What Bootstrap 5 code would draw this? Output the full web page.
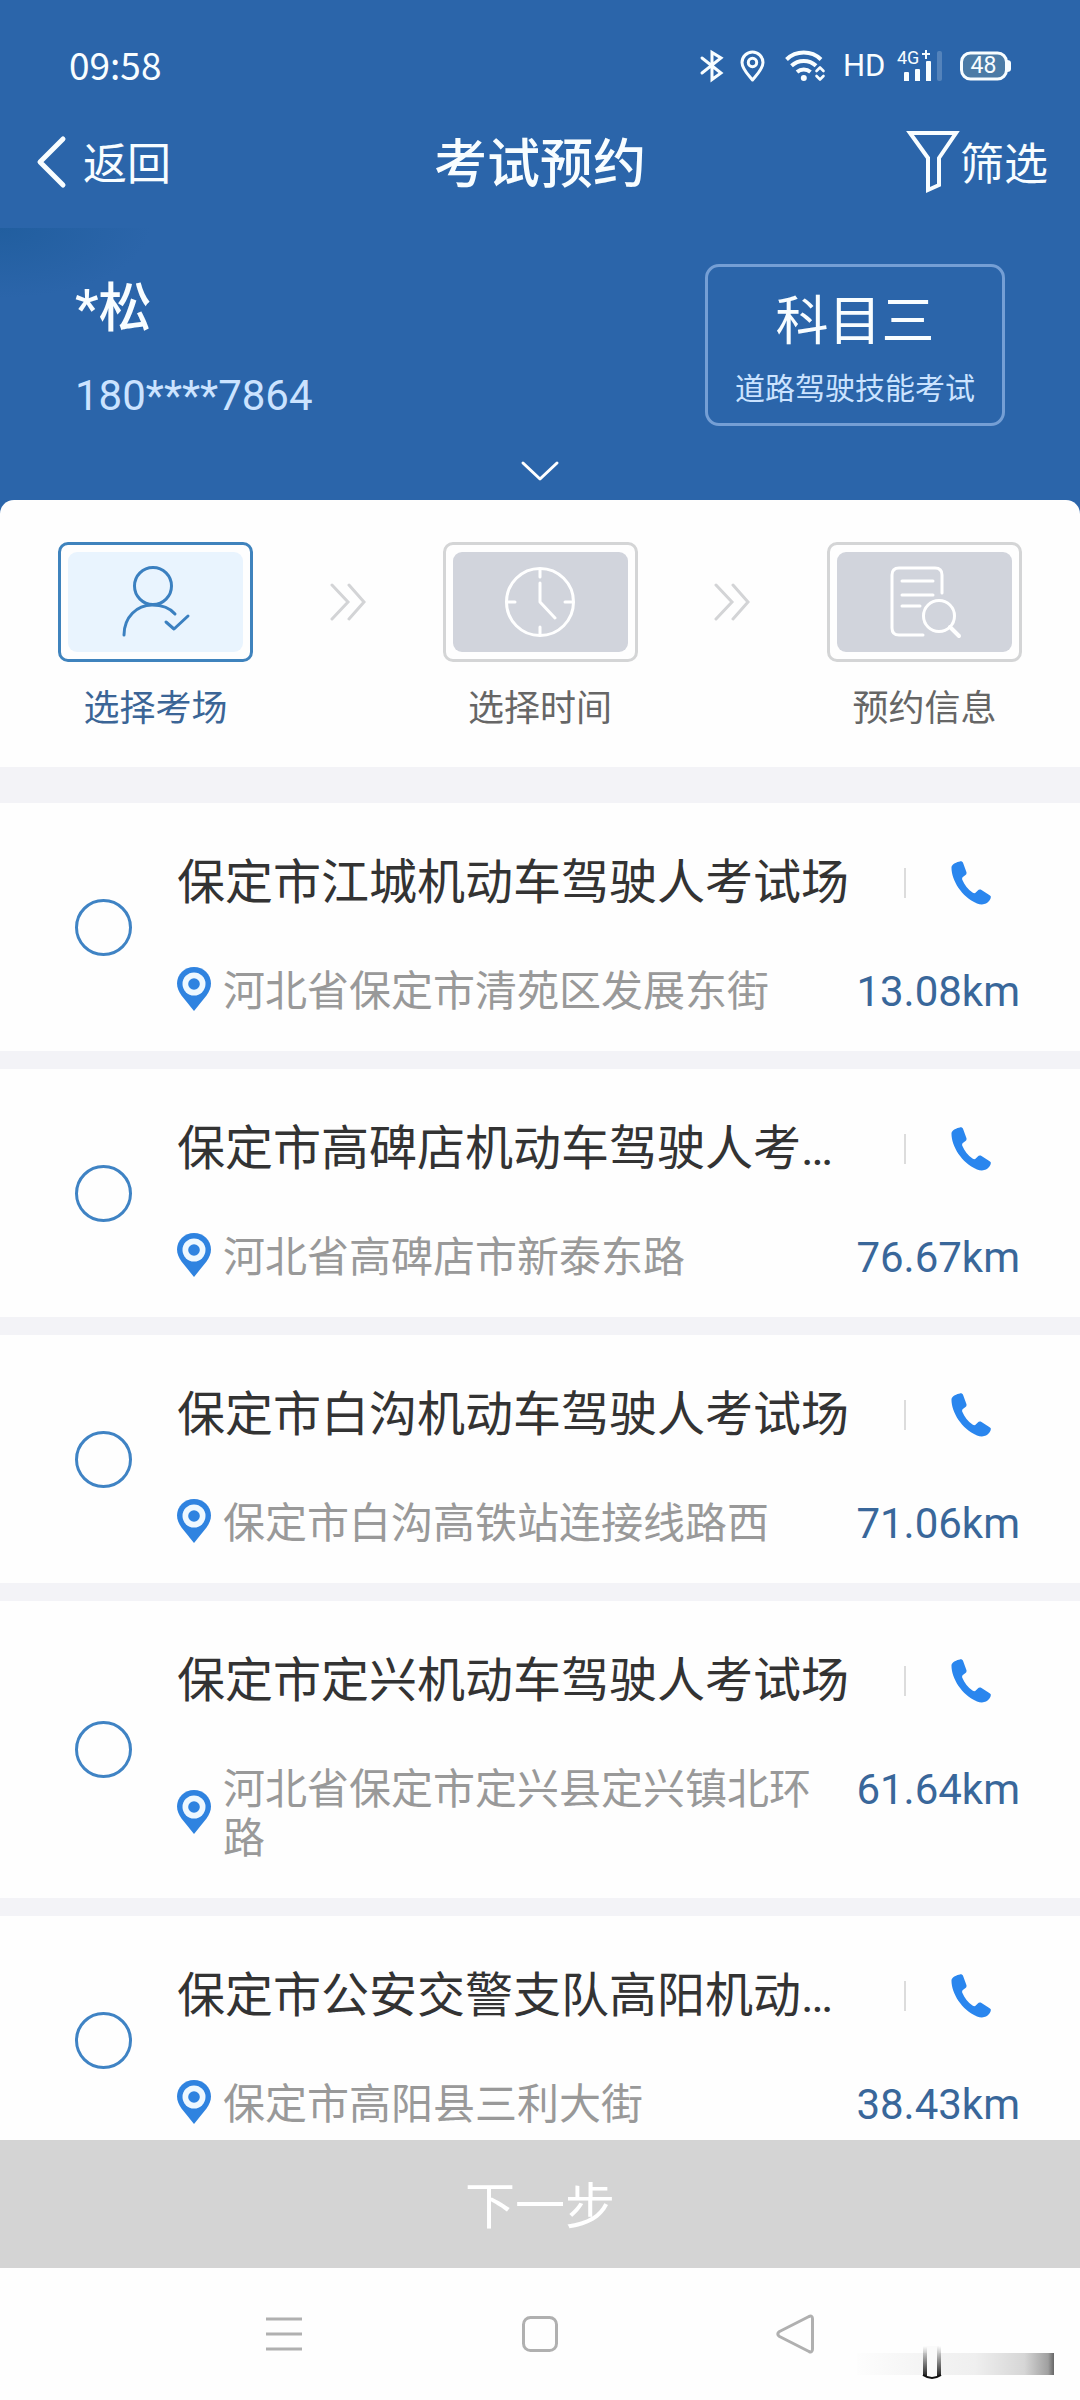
<!DOCTYPE html>
<html lang="zh-CN">
<head>
<meta charset="utf-8">
<meta name="viewport" content="width=device-width, initial-scale=1">
<title>考试预约</title>
<link href="https://cdn.jsdelivr.net/npm/bootstrap@5.3.0/dist/css/bootstrap.min.css" rel="stylesheet">
<style>
  body { font-family: Roboto, "Noto Sans CJK SC", sans-serif; color: #333; background: #fefefe; }
  svg { display: block; flex: none; overflow: visible; }
  .line-icon { fill: none; stroke: currentColor; stroke-linecap: round; stroke-linejoin: round; }
  .hero { background: #2b65aa; color: #f8fdff; }
  .status { padding: 38px 69px 0; height: 92px; line-height: 52px; }
  .clock { font-family: "Noto Sans CJK SC", sans-serif; font-size: 37px; }
  .status-icons { height: 56px; }
  .hd { font-size: 31px; width: 54px; }
  .signal { width: 46px; height: 32px; margin-right: 17px; }
  .net-type { font-size: 18px; line-height: 18px; top: -1px; left: 0; }
  .battery { width: 51px; height: 32px; }
  .battery-level { font-size: 23px; line-height: 32px; width: 47px; top: 0; left: 0; }
  .topbar { height: 136px; padding: 10px 32px 0; }
  .topbar > * { flex: 1 1 0; }
  .topbar h1 { font-size: 53px; line-height: 60px; font-weight: 500; flex: 0 0 auto; }
  .bar-link { font-size: 44px; line-height: 60px; color: inherit; text-decoration: none; }
  .bar-link svg { margin-bottom: 6px; }
  .back-icon { margin: 0 17px 0 4px; }
  .profile { height: 232px; padding: 0 75px; background: radial-gradient(ellipse 150px 70px at 0 0, #215e9f, #2b65aa); }
  .who { padding-top: 51px; }
  .who-name { font-size: 53px; line-height: 60px; font-weight: 500; }
  .who-phone { font-size: 42px; line-height: 48px; margin-top: 33px; color: #cbe3ff; }
  .subject { width: 300px; height: 162px; margin-top: 36px; border: 3px solid #759fd5; border-radius: 14px; }
  .subject-name { font-size: 53px; line-height: 60px; margin-top: 25px; }
  .subject-note { font-size: 30px; line-height: 40px; margin-top: 17px; color: #cbe3ff; }
  .expand { padding-bottom: 18px; }
  .sheet-wrap { background: #2b65aa; }
  .sheet { background: #fefefe; border-radius: 14px 14px 0 0; padding: 42px 58px 33px; }
  .step { width: 195px; color: #666; font-size: 36px; line-height: 50px; }
  .step-frame { height: 120px; border: 3px solid #d4d5d6; border-radius: 10px; padding: 7px; margin-bottom: 22px; }
  .step-face { background: #d1d4dc; color: #fff; border-radius: 9px; }
  .step.current { color: #3b6596; }
  .current .step-frame { border-color: #3f83bd; }
  .current .step-face { background: #e9f4fe; color: #3b80c0; }
  .arrows { height: 120px; color: #d3d4d6; }
  .list-area { background: #f3f3f7; min-height: 0; overflow-y: auto; scrollbar-width: none; padding-top: 36px; }
  .list-area::-webkit-scrollbar { display: none; }
  .site { background: #fefefe; padding: 51px 60px 35px 75px; margin-bottom: 18px; }
  .site-radio { appearance: none; width: 57px; height: 57px; margin: 0 45px 16px 0; border: 3px solid #3f83c4; border-radius: 50%; background: #fefefe; flex: none; }
  .site-radio:checked { background: #2e86ec; box-shadow: inset 0 0 0 10px #fff; }
  .site-body { min-width: 0; }
  .site-name { font-size: 48px; line-height: 58px; }
  .rule { width: 2px; height: 30px; background: #dcdcdc; margin: 0 45px 0 54px; }
  .call { color: #2a86ee; margin-right: 29px; }
  .site-meta { margin-top: 55px; font-size: 42px; line-height: 49px; }
  .pin { color: #2f83e0; margin: 0 12px 5px 0; }
  .addr { color: #999; min-width: 0; }
  .dist { color: #39679a; margin-left: 10px; }
  .next { height: 128px; background: #d4d4d4; color: #fff; font-size: 50px; border: 0; padding-top: 8px; }
  .sysnav { height: 132px; padding: 0 153px 0 156px; color: #b0b0b0; }
  .sysnav button { background: none; border: 0; color: inherit; padding: 0; }
  .smudge { right: 26px; bottom: 20px; }
</style>
</head>
<body class="vh-100 d-flex flex-column overflow-hidden">
<svg width="0" height="0" class="position-absolute" aria-hidden="true">
  <symbol id="pin" viewBox="0 0 34 44"><path fill="currentColor" d="M17 0C7.600 0 0 7.400 0 16.600 0 21 2 25 4.500 28.500L17 44 29.500 28.500C32 25 34 21 34 16.600 34 7.400 26.400 0 17 0Z"/><circle cx="17" cy="17" r="11.500" fill="#eef8ff"/><circle cx="17" cy="17" r="5.800" fill="currentColor"/></symbol>
  <symbol id="phone" viewBox="0 0 40 44"><path fill="currentColor" d="M9 .4C6 .8 1 3 .5 6 0 18 10 36 26 42.500 29 43.700 33 43.600 35 42.600 38 41 40.200 37.500 39.800 35.500 39.600 34.600 38.500 34 37.500 33.400L30.500 29C29 28.200 27.600 28.500 26.800 29.500L24.500 31.800C23.800 32.500 22.500 32.200 21.500 31.500 17 28.400 13.500 24 11.300 18.800 10.800 17.500 11.200 16.500 12.200 15.800L14.500 14C15.500 13.200 15.800 12 15.300 10.700L12.200 2.200C11.700.9 10.500.2 9 .4Z"/></symbol>
  <symbol id="arrows" viewBox="0 0 36 38"><path d="M2 2 18 19 2 36M19 2 34 19 19 36" fill="none" stroke="currentColor" stroke-width="3" stroke-linecap="round"/></symbol>
</svg>

<header class="hero">
  <div class="status d-flex justify-content-between">
    <span class="clock">09:58</span>
    <div class="status-icons d-flex align-items-center">
      <svg width="24" height="32" viewBox="0 0 24 32" class="line-icon me-3" stroke-width="3"><path d="M2 8 21 23 12 29.500V2.500L21 8 2 23" stroke-linejoin="miter"/></svg>
      <svg width="25" height="32" viewBox="0 0 25 32" class="line-icon me-3" stroke-width="3"><path d="M12.500 30C8 24.500 2 19 2 12.500a10.500 10.500 0 0 1 21 0C23 19 17 24.500 12.500 30Z"/><circle cx="12.500" cy="12.500" r="4.200"/></svg>
      <svg width="42" height="32" viewBox="0 0 42 32" class="line-icon ms-1 me-3" stroke-width="4"><g stroke-linecap="butt"><path d="M1.500 9.500a25 25 0 0 1 34.500 0M6.500 15.800a18 18 0 0 1 24.500 0M12 22a10.500 10.500 0 0 1 13.500 0"/></g><circle cx="18.800" cy="28" r="3" fill="currentColor" stroke="none"/><path stroke-width="2.600" d="m31.500 21 3.500-3.500 3.500 3.500M31.500 26l3.500 3.500 3.500-3.500"/></svg>
      <span class="hd">HD</span>
      <div class="signal position-relative">
        <span class="net-type position-absolute">4G</span>
        <svg width="46" height="32" viewBox="0 0 46 32" fill="currentColor"><path d="M25 3h3V0h2v3h3v2h-3v4h-2V5h-3zM7 23q0-1 1-1h3q1 0 1 1v8H7zM18 20q0-1 1-1h3q1 0 1 1v11h-5zM29 12q0-1 1-1h3q1 0 1 1v19h-5z"/><rect x="40" y="1" width="5" height="30" rx="2" opacity=".2"/></svg>
      </div>
      <div class="battery position-relative">
        <svg width="51" height="32" viewBox="0 0 51 32"><rect x="1.500" y="3" width="45" height="26" rx="9" fill="#4b7ba6" stroke="currentColor" stroke-width="3"/><path d="M47 10q4 0 4 3v6q0 3-4 3z" fill="currentColor"/></svg>
        <span class="battery-level position-absolute text-center">48</span>
      </div>
    </div>
  </div>
  <nav class="topbar d-flex align-items-center">
    <div><a href="#" class="bar-link d-inline-flex align-items-center">
      <svg width="30" height="52" viewBox="0 0 30 52" class="line-icon back-icon" stroke-width="5"><path d="M27 3 4 26 27 49"/></svg>返回</a></div>
    <h1 class="m-0">考试预约</h1>
    <div class="d-flex justify-content-end"><a href="#" class="bar-link d-flex align-items-center">
      <svg width="54" height="64" viewBox="0 0 54 64" class="line-icon" stroke-width="4"><path stroke-linejoin="miter" d="M4 3H50L33 28V55L22 60V28Z"/></svg>筛选</a></div>
  </nav>
</header>
<div class="hero">
  <section class="profile d-flex justify-content-between align-items-start">
    <div class="who">
      <div class="who-name">*松</div>
      <div class="who-phone">180****7864</div>
    </div>
    <div class="subject text-center">
      <div class="subject-name">科目三</div>
      <div class="subject-note">道路驾驶技能考试</div>
    </div>
  </section>
  <div class="expand">
    <button class="btn p-0 border-0 d-block mx-auto text-white" aria-label="展开">
      <svg width="40" height="22" viewBox="0 0 40 22" class="line-icon" stroke-width="3"><path d="M3 3 20 19 37 3"/></svg>
    </button>
  </div>
</div>
<div class="sheet-wrap">
  <section class="sheet d-flex align-items-start">
    <div class="step current text-center">
      <div class="step-frame"><div class="step-face h-100 d-flex align-items-center justify-content-center">
        <svg width="70" height="74" viewBox="2 0 70 74" class="line-icon" stroke-width="3"><circle cx="34" cy="21" r="18.500"/><path d="M5 70C5 52 18 40 33 40 43 40 51 43 56 49M47 57 55 64 69 51"/></svg>
      </div></div>选择考场
    </div>
    <div class="arrows flex-fill d-flex align-items-center justify-content-center"><svg width="36" height="38"><use href="#arrows"/></svg></div>
    <div class="step text-center">
      <div class="step-frame"><div class="step-face h-100 d-flex align-items-center justify-content-center">
        <svg width="72" height="72" viewBox="0 0 72 72" class="line-icon" stroke-width="3"><circle cx="36" cy="36" r="33.500"/><path d="M36 3v8M36 61v8M3 36h8M61 36h8M36 17V36L51 52"/></svg>
      </div></div>选择时间
    </div>
    <div class="arrows flex-fill d-flex align-items-center justify-content-center"><svg width="36" height="38"><use href="#arrows"/></svg></div>
    <div class="step text-center">
      <div class="step-frame"><div class="step-face h-100 d-flex align-items-center justify-content-center">
        <svg width="72" height="72" viewBox="0 0 72 72" class="line-icon" stroke-width="3"><path d="M53 27V9q0-7-7-7H10Q3 2 3 9V62q0 7 7 7H34M13 15H44M13 29H44M13 40H31"/><circle cx="50" cy="50" r="15.500"/><path stroke-width="4" d="M61 61 70 70"/></svg>
      </div></div>预约信息
    </div>
  </section>
</div>

<main class="list-area flex-grow-1">
  <article class="site d-flex align-items-center">
    <input class="site-radio" type="radio" name="site" id="s1">
    <div class="site-body flex-grow-1">
      <div class="d-flex align-items-center">
        <label for="s1" class="site-name text-truncate flex-grow-1">保定市江城机动车驾驶人考试场</label><span class="rule flex-shrink-0"></span>
        <a href="#" class="call" aria-label="电话"><svg width="40" height="44"><use href="#phone"/></svg></a>
      </div>
      <div class="site-meta d-flex"><div class="d-flex align-items-center flex-grow-1 addr"><svg class="pin" width="34" height="44"><use href="#pin"/></svg><span>河北省保定市清苑区发展东街</span></div><span class="dist">13.08km</span></div>
    </div>
  </article>
  <article class="site d-flex align-items-center">
    <input class="site-radio" type="radio" name="site" id="s2">
    <div class="site-body flex-grow-1">
      <div class="d-flex align-items-center">
        <label for="s2" class="site-name text-truncate flex-grow-1">保定市高碑店机动车驾驶人考试场</label><span class="rule flex-shrink-0"></span>
        <a href="#" class="call" aria-label="电话"><svg width="40" height="44"><use href="#phone"/></svg></a>
      </div>
      <div class="site-meta d-flex"><div class="d-flex align-items-center flex-grow-1 addr"><svg class="pin" width="34" height="44"><use href="#pin"/></svg><span>河北省高碑店市新泰东路</span></div><span class="dist">76.67km</span></div>
    </div>
  </article>
  <article class="site d-flex align-items-center">
    <input class="site-radio" type="radio" name="site" id="s3">
    <div class="site-body flex-grow-1">
      <div class="d-flex align-items-center">
        <label for="s3" class="site-name text-truncate flex-grow-1">保定市白沟机动车驾驶人考试场</label><span class="rule flex-shrink-0"></span>
        <a href="#" class="call" aria-label="电话"><svg width="40" height="44"><use href="#phone"/></svg></a>
      </div>
      <div class="site-meta d-flex"><div class="d-flex align-items-center flex-grow-1 addr"><svg class="pin" width="34" height="44"><use href="#pin"/></svg><span>保定市白沟高铁站连接线路西</span></div><span class="dist">71.06km</span></div>
    </div>
  </article>
  <article class="site d-flex align-items-center">
    <input class="site-radio" type="radio" name="site" id="s4">
    <div class="site-body flex-grow-1">
      <div class="d-flex align-items-center">
        <label for="s4" class="site-name text-truncate flex-grow-1">保定市定兴机动车驾驶人考试场</label><span class="rule flex-shrink-0"></span>
        <a href="#" class="call" aria-label="电话"><svg width="40" height="44"><use href="#phone"/></svg></a>
      </div>
      <div class="site-meta d-flex"><div class="d-flex align-items-center flex-grow-1 addr"><svg class="pin" width="34" height="44"><use href="#pin"/></svg><span>河北省保定市定兴县定兴镇北环路</span></div><span class="dist">61.64km</span></div>
    </div>
  </article>
  <article class="site d-flex align-items-center">
    <input class="site-radio" type="radio" name="site" id="s5">
    <div class="site-body flex-grow-1">
      <div class="d-flex align-items-center">
        <label for="s5" class="site-name text-truncate flex-grow-1">保定市公安交警支队高阳机动车驾驶人考试场</label><span class="rule flex-shrink-0"></span>
        <a href="#" class="call" aria-label="电话"><svg width="40" height="44"><use href="#phone"/></svg></a>
      </div>
      <div class="site-meta d-flex"><div class="d-flex align-items-center flex-grow-1 addr"><svg class="pin" width="34" height="44"><use href="#pin"/></svg><span>保定市高阳县三利大街</span></div><span class="dist">38.43km</span></div>
    </div>
  </article>
</main>

<footer class="flex-shrink-0">
  <button class="next w-100 d-block">下一步</button>
  <div class="sysnav position-relative d-flex align-items-center">
    <button class="flex-fill" aria-label="菜单"><svg class="line-icon mx-auto" width="38" height="42" viewBox="0 0 38 42" stroke-width="3"><path stroke-linecap="butt" d="M1 6H37M1 21H37M1 36H37"/></svg></button>
    <button class="flex-fill" aria-label="主页"><svg class="line-icon mx-auto" width="38" height="42" viewBox="0 0 38 42" stroke-width="3"><rect x="2.500" y="4.500" width="33" height="33" rx="7"/></svg></button>
    <button class="flex-fill" aria-label="返回"><svg class="line-icon mx-auto" width="42" height="42" viewBox="0 0 42 42" stroke-width="3"><path d="M33 3.500 3.500 18.500Q0 21 3.500 23.500L33 38.500Q36.500 40 36.500 36V6Q36.500 2 33 3.500Z"/></svg></button>
    <svg class="smudge position-absolute" width="199" height="36" viewBox="0 0 199 36" aria-hidden="true">
      <defs>
        <linearGradient id="fade"><stop offset="0" stop-color="#fdfdfd"/><stop offset=".3" stop-color="#f5f5f5"/><stop offset=".6" stop-color="#efefef"/><stop offset=".85" stop-color="#d6d6d6"/><stop offset=".97" stop-color="#a0a0a0"/><stop offset="1" stop-color="#666"/></linearGradient>
        <linearGradient id="drop" x2="0" y2="1"><stop offset="0" stop-color="#222" stop-opacity="0"/><stop offset="1" stop-color="#222"/></linearGradient>
      </defs>
      <rect x="2" y="9" width="197" height="22" fill="url(#fade)"/>
      <rect x="72" y="2" width="12" height="30" fill="#fafafa"/>
      <rect x="68" y="2" width="4" height="30" fill="url(#drop)"/><rect x="82" y="2" width="4" height="30" fill="url(#drop)"/>
      <path d="M68 31Q77 37 86 31" fill="none" stroke="#111" stroke-width="2"/>
    </svg>
  </div>
</footer>
<script src="https://cdn.jsdelivr.net/npm/bootstrap@5.3.0/dist/js/bootstrap.bundle.min.js"></script>
</body>
</html>
